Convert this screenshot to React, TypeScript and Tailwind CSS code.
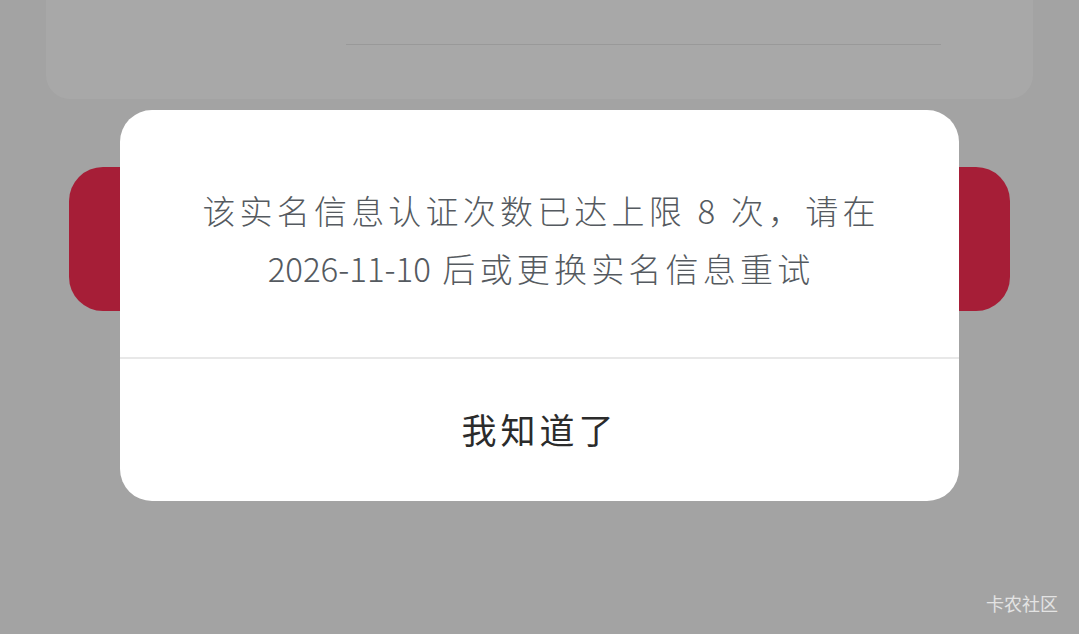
export default function App() {
  return (
    <div className="relative h-[634px] w-[1079px] overflow-hidden bg-[#a3a3a3] font-['Noto_Sans_CJK_SC','Liberation_Sans',sans-serif]">
      <div className="mx-[46px] flex h-[99px] justify-end rounded-b-[24px] bg-[#a8a8a8] pr-[92px] pt-[44px]">
        <div className="h-px w-[595px] bg-[#999999]" />
      </div>
      <div className="mx-[69px] mt-[68px] h-[144px] rounded-[34px] bg-[#a61e37]" />

      <div className="absolute left-[120px] top-[110px] flex h-[391px] w-[839px] flex-col rounded-[32px] bg-white">
        <div className="flex h-[247px] flex-col items-center justify-center pl-[3px] pt-[11px] text-center text-[33px] font-light leading-[58px] tracking-[4.2px] text-[#555a60]">
          <p>该实名信息认证次数已达上限 8 次，请在</p>
          <p><span className="tracking-normal">2026-11-10</span> 后或更换实名信息重试</p>
        </div>
        <div className="h-[2px] bg-[#e8e8e8]" />
        <button className="flex-1 pb-[2px] text-[35px] font-normal tracking-[4px] text-[#2b2b2b]">我知道了</button>
      </div>

      <span className="absolute bottom-[19px] right-[21px] text-[18px] leading-[24px] text-[#e3e3e3]">卡农社区</span>
    </div>
  );
}
